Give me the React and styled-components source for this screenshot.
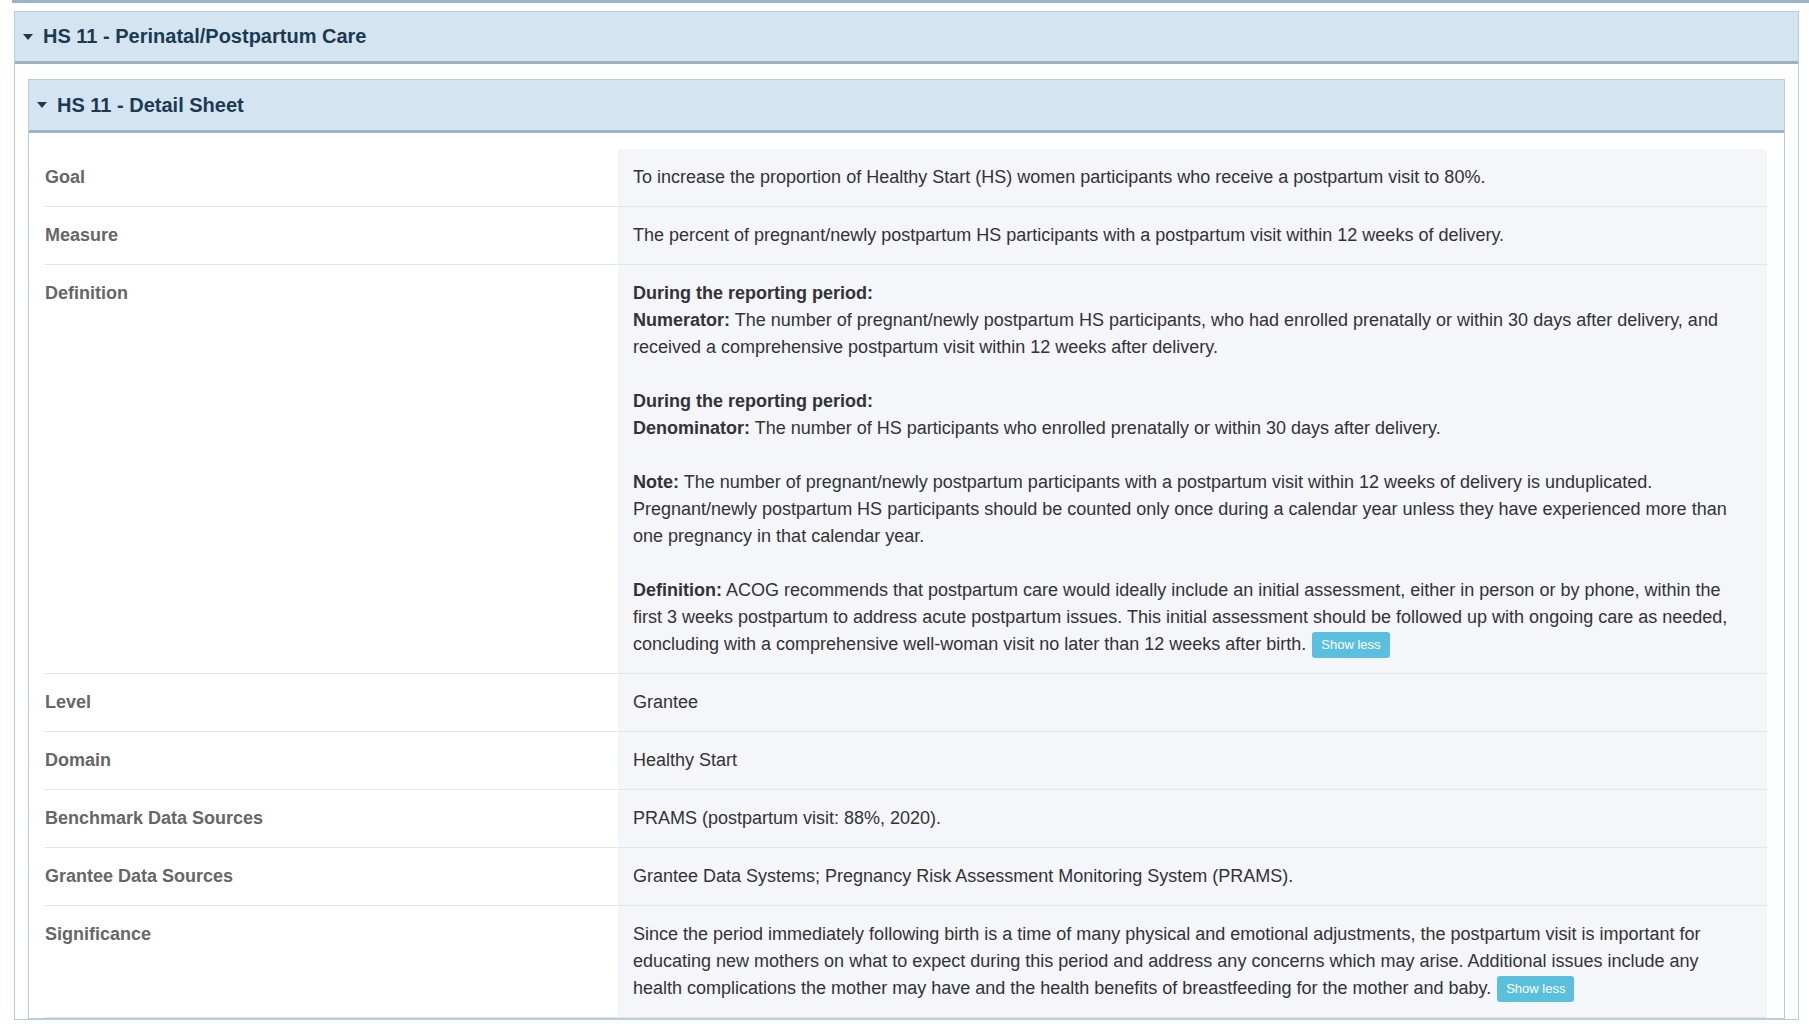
import React from 'react'
import styled, { createGlobalStyle } from 'styled-components'

const Global = createGlobalStyle`
  body { margin: 0; background: #fff; font-family: "Liberation Sans", Arial, sans-serif; }
`

const Page = styled.div`
  border-top: 3px solid #98b4c6;
  margin-left: 12px;
  padding: 0 10px 0 2px;
`

const Panel = styled.div`
  border: 1px solid #b7cde0;
  margin-top: ${p => p.$top}px;
  background: #fff;
`

const Header = styled.div`
  display: flex;
  align-items: center;
  gap: 10px;
  height: ${p => p.$h}px;
  padding-left: 8px;
  background: #d5e4f1;
  border-bottom: 3px solid #98b4c6;
  color: #1b3a52;
  font-weight: bold;
  font-size: 20px;
`

const Caret = styled.span`
  width: 0; height: 0;
  border-left: 5px solid transparent;
  border-right: 5px solid transparent;
  border-top: 6px solid #1b3a52;
`

const Body = styled.div`
  padding: ${p => p.$pad};
`

const Table = styled.div`
  display: grid;
  grid-template-columns: 573px 1fr;
  margin: 0 17px 0 16px;
  padding-top: 16px;
`

const Label = styled.div`
  padding: 15px 0;
  font-weight: bold;
  color: #666;
  font-size: 18px;
  line-height: 27px;
  border-bottom: 1px solid #e2e5ea;
`

const Value = styled.div`
  padding: 15px 30px 15px 15px;
  background: #f4f6fa;
  color: #333;
  font-size: 18px;
  line-height: 27px;
  border-bottom: 1px solid #e2e5ea;
  p { margin: 0 0 27px; }
  p:last-child { margin: 0; }
`

const ShowLess = styled.button`
  background: #5bc0de;
  color: #fff;
  border: 0;
  border-radius: 3px;
  font-family: inherit;
  font-size: 13px;
  line-height: 16px;
  padding: 5px 9px;
  margin-left: 6px;
  vertical-align: 1px;
`

const rows = [
  ['Goal', 'To increase the proportion of Healthy Start (HS) women participants who receive a postpartum visit to 80%.'],
  ['Measure', 'The percent of pregnant/newly postpartum HS participants with a postpartum visit within 12 weeks of delivery.'],
  ['Definition', (
    <>
      <p><b>During the reporting period:</b><br /><b>Numerator:</b> The number of pregnant/newly postpartum HS participants, who had enrolled prenatally or within 30 days after delivery, and received a comprehensive postpartum visit within 12 weeks after delivery.</p>
      <p><b>During the reporting period:</b><br /><b>Denominator:</b> The number of HS participants who enrolled prenatally or within 30 days after delivery.</p>
      <p><b>Note:</b> The number of pregnant/newly postpartum participants with a postpartum visit within 12 weeks of delivery is unduplicated. Pregnant/newly postpartum HS participants should be counted only once during a calendar year unless they have experienced more than one pregnancy in that calendar year.</p>
      <p><b>Definition:</b> ACOG recommends that postpartum care would ideally include an initial assessment, either in person or by phone, within the first 3 weeks postpartum to address acute postpartum issues. This initial assessment should be followed up with ongoing care as needed, concluding with a comprehensive well-woman visit no later than 12 weeks after birth.<ShowLess>Show less</ShowLess></p>
    </>
  )],
  ['Level', 'Grantee'],
  ['Domain', 'Healthy Start'],
  ['Benchmark Data Sources', 'PRAMS (postpartum visit: 88%, 2020).'],
  ['Grantee Data Sources', 'Grantee Data Systems; Pregnancy Risk Assessment Monitoring System (PRAMS).'],
  ['Significance', (
    <>Since the period immediately following birth is a time of many physical and emotional adjustments, the postpartum visit is important for educating new mothers on what to expect during this period and address any concerns which may arise. Additional issues include any health complications the mother may have and the health benefits of breastfeeding for the mother and baby.<ShowLess>Show less</ShowLess></>
  )],
]

export default function App() {
  return (
    <>
      <Global />
      <Page>
        <Panel $top={8}>
          <Header $h={49}><Caret />HS 11 - Perinatal/Postpartum Care</Header>
          <Body $pad="15px 13px 0 13px">
            <Panel $top={0}>
              <Header $h={50}><Caret />HS 11 - Detail Sheet</Header>
              <Table>
                {rows.map(([k, v]) => (
                  <React.Fragment key={k}>
                    <Label>{k}</Label>
                    <Value>{v}</Value>
                  </React.Fragment>
                ))}
              </Table>
            </Panel>
          </Body>
        </Panel>
      </Page>
    </>
  )
}
